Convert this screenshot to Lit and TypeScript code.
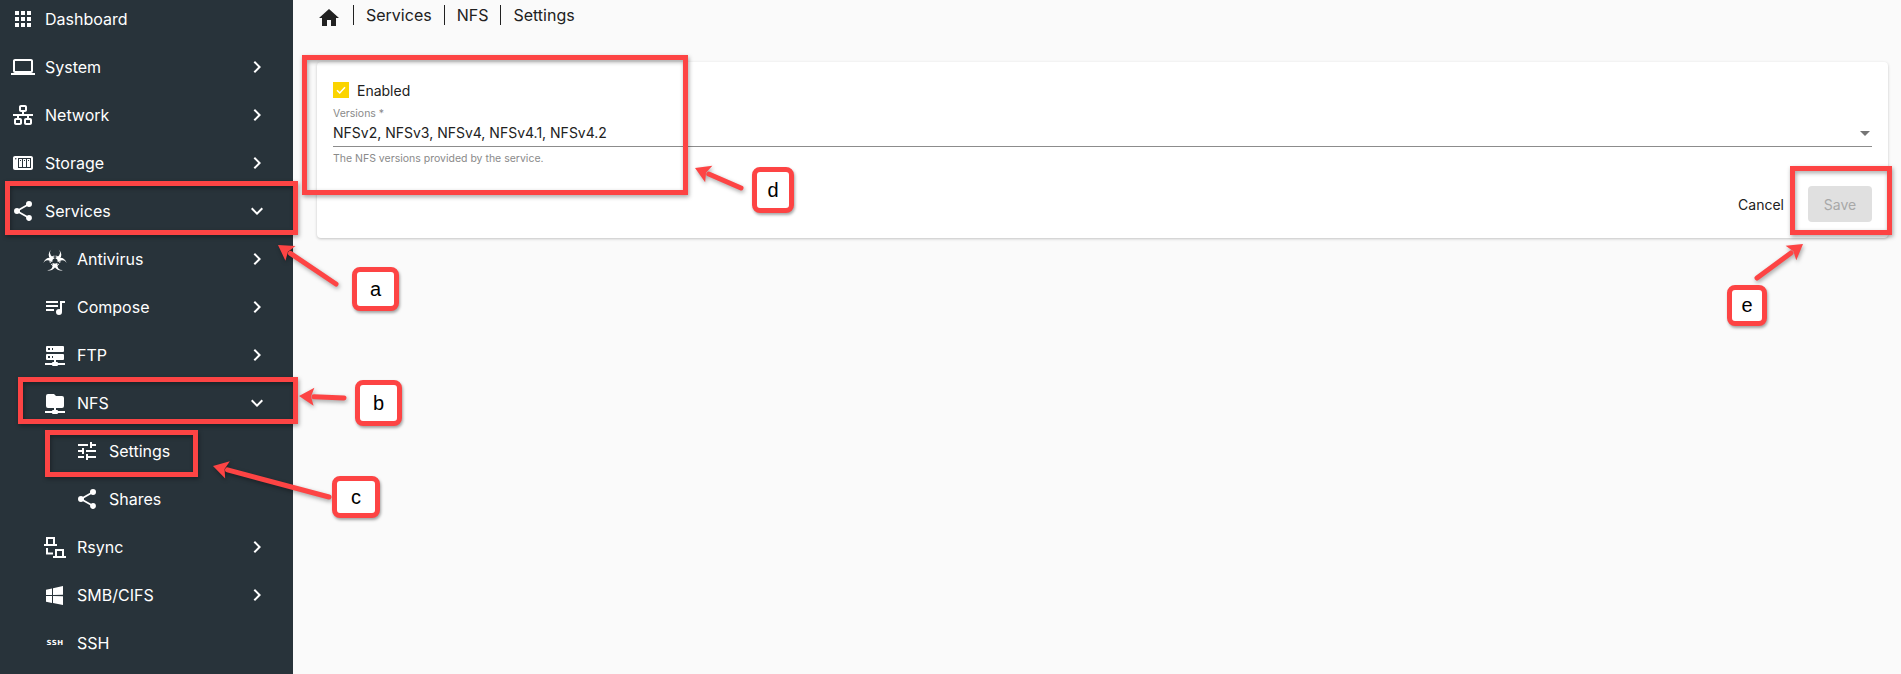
import { LitElement, html, css, svg } from "lit";
import { customElement } from "lit/decorators.js";

const P: Record<string, string> = {
  apps: "M16,20H20V16H16M16,14H20V10H16M10,8H14V4H10M16,8H20V4H16M10,14H14V10H10M4,14H8V10H4M4,20H8V16H4M10,20H14V16H10M4,8H8V4H4V8Z",
  laptop: "M4,6H20V16H4M20,18A2,2 0 0,0 22,16V6C22,4.89 21.1,4 20,4H4C2.89,4 2,4.89 2,6V16A2,2 0 0,0 4,18H0V20H24V18H20Z",
  lan: "M10,2C8.89,2 8,2.89 8,4V7C8,8.11 8.89,9 10,9H11V11H2V13H6V15H5C3.89,15 3,15.89 3,17V20C3,21.11 3.89,22 5,22H9C10.11,22 11,21.11 11,20V17C11,15.89 10.11,15 9,15H8V13H16V15H15C13.89,15 13,15.89 13,17V20C13,21.11 13.89,22 15,22H19C20.11,22 21,21.11 21,20V17C21,15.89 20.11,15 19,15H18V13H22V11H13V9H14C15.11,9 16,8.11 16,7V4C16,2.89 15.11,2 14,2H10M10,4H14V7H10V4M5,17H9V20H5V17M15,17H19V20H15V17Z",
  nas: "M4,5C2.89,5 2,5.89 2,7V17C2,18.11 2.89,19 4,19H20C21.11,19 22,18.11 22,17V7C22,5.89 21.11,5 20,5H4M4.75,7A0.75,0.75 0 0,1 5.5,7.75A0.75,0.75 0 0,1 4.75,8.5A0.75,0.75 0 0,1 4,7.75A0.75,0.75 0 0,1 4.75,7M7,7H20V17H7V7M8,8V16H11V8H8M12,8V16H15V8H12M16,8V16H19V8H16M9,9H10V10H9V9M13,9H14V10H13V9M17,9H18V10H17V9Z",
  share: "M18,16.08C17.24,16.08 16.56,16.38 16.04,16.85L8.91,12.7C8.96,12.47 9,12.24 9,12C9,11.76 8.96,11.53 8.91,11.3L15.96,7.19C16.5,7.69 17.21,8 18,8A3,3 0 0,0 21,5A3,3 0 0,0 18,2A3,3 0 0,0 15,5C15,5.24 15.04,5.47 15.09,5.7L8.04,9.81C7.5,9.31 6.79,9 6,9A3,3 0 0,0 3,12A3,3 0 0,0 6,15C6.79,15 7.5,14.69 8.04,14.19L15.16,18.34C15.11,18.55 15.08,18.77 15.08,19C15.08,20.61 16.39,21.91 18,21.91C19.61,21.91 20.92,20.61 20.92,19A2.92,2.92 0 0,0 18,16.08Z",
  music: "M15,6H3V8H15V6M15,10H3V12H15V10M3,16H11V14H3V16M17,6V14.18C16.69,14.07 16.35,14 16,14A3,3 0 0,0 13,17A3,3 0 0,0 16,20A3,3 0 0,0 19,17V8H22V6H17Z",
  server: "M13,19H14A1,1 0 0,1 15,20H22V22H15A1,1 0 0,1 14,23H10A1,1 0 0,1 9,22H2V20H9A1,1 0 0,1 10,19H11V17H4A1,1 0 0,1 3,16V12A1,1 0 0,1 4,11H20A1,1 0 0,1 21,12V16A1,1 0 0,1 20,17H13V19M4,3H20A1,1 0 0,1 21,4V8A1,1 0 0,1 20,9H4A1,1 0 0,1 3,8V4A1,1 0 0,1 4,3M9,7H10V5H9V7M9,15H10V13H9V15M5,5V7H7V5H5M5,13V15H7V13H5Z",
  folder: "M3,15V5A2,2 0 0,1 5,3H11L13,5H19A2,2 0 0,1 21,7V15A2,2 0 0,1 19,17H13V19H14A1,1 0 0,1 15,20H22V22H15A1,1 0 0,1 14,23H10A1,1 0 0,1 9,22H2V20H9A1,1 0 0,1 10,19H11V17H5A2,2 0 0,1 3,15Z",
  tune: "M3,17V19H9V17H3M3,5V7H13V5H3M13,21V19H21V17H13V15H11V21H13M7,9V11H3V13H7V15H9V9H7M21,13V11H11V13H21M15,9H17V7H21V5H17V3H15V9Z",
  windows: "M3,12V6.75L9,5.43V11.91L3,12M20,3V11.75L10,11.9V5.21L20,3M3,13L9,13.09V19.9L3,18.75V13M20,13.25V22L10,20.09V13.1L20,13.25Z",
  home: "M10,20V14H14V20H19V12H22L12,3L2,12H5V20H10Z",
  right: "M8.59,16.58L13.17,12L8.59,7.41L10,6L16,12L10,18L8.59,16.58Z",
  down: "M7.41,8.58L12,13.17L16.59,8.58L18,10L12,16L6,10L7.41,8.58Z",
  rsync: "M3,2H12V9H14V11H1V9H3V2M5,4V9H10V4H5M3,13H5V17.5H10V19.5H3V13M12,14H21V21H23V23H10V21H12V14M14,16V21H19V16H14Z",
};

const icon = (name: string) =>
  html`<svg class="ic" viewBox="0 0 24 24"><path fill-rule="evenodd" d=${P[name]}></path></svg>`;

const lobe = "M8.2,1.3A6.3,6.3 0 1 0 15.8,1.3A4.8,4.8 0 1 1 8.2,1.3Z";
const biohazard = html`<svg class="ic" viewBox="0 0 24 24">
  <g transform="translate(0 1.5)">
    ${[0, 120, 240].map(
      (a) => svg`<path transform="rotate(${a} 12 12.5)" fill="currentColor" d=${lobe}></path>`
    )}
    <circle cx="12" cy="12.5" r="5" fill="none" stroke="currentColor" stroke-width="1"></circle>
    <circle cx="12" cy="12.5" r="2.6" fill="#28333a"></circle>
    <g stroke="#28333a" stroke-width="1.1">
      ${[0, 120, 240].map(
        (a) => svg`<line transform="rotate(${a} 12 12.5)" x1="12" y1="12.5" x2="12" y2="4"></line>`
      )}
    </g>
  </g>
</svg>`;

type Row = { label: string; ic?: string; lvl: number; arrow?: "right" | "down"; custom?: unknown };

const rows: Row[] = [
  { label: "Dashboard", ic: "apps", lvl: 0 },
  { label: "System", ic: "laptop", lvl: 0, arrow: "right" },
  { label: "Network", ic: "lan", lvl: 0, arrow: "right" },
  { label: "Storage", ic: "nas", lvl: 0, arrow: "right" },
  { label: "Services", ic: "share", lvl: 0, arrow: "down" },
  { label: "Antivirus", lvl: 1, arrow: "right", custom: biohazard },
  { label: "Compose", ic: "music", lvl: 1, arrow: "right" },
  { label: "FTP", ic: "server", lvl: 1, arrow: "right" },
  { label: "NFS", ic: "folder", lvl: 1, arrow: "down" },
  { label: "Settings", ic: "tune", lvl: 2 },
  { label: "Shares", ic: "share", lvl: 2 },
  { label: "Rsync", ic: "rsync", lvl: 1, arrow: "right" },
  { label: "SMB/CIFS", ic: "windows", lvl: 1, arrow: "right" },
  { label: "SSH", lvl: 1, custom: html`<span class="ssh ic">SSH</span>` },
];

const boxes = [
  { x: 5, y: 181, w: 293, h: 54 },
  { x: 18, y: 377, w: 280, h: 47 },
  { x: 45, y: 430, w: 153, h: 47 },
  { x: 302, y: 55, w: 386, h: 140 },
  { x: 1790, y: 166, w: 102, h: 69 },
];
const labels = [
  { t: "a", x: 352, y: 267, w: 47, h: 44 },
  { t: "b", x: 355, y: 380, w: 47, h: 46 },
  { t: "c", x: 332, y: 476, w: 48, h: 42 },
  { t: "d", x: 752, y: 167, w: 42, h: 46 },
  { t: "e", x: 1727, y: 285, w: 40, h: 41 },
];
const arrows = [
  [336, 284, 278, 245],
  [344, 398, 299, 396],
  [329, 497, 213, 466],
  [741, 188, 695, 168],
  [1757, 278, 1803, 244],
];
const arrowShape = (a: number[]) => {
  const [x1, y1, x2, y2] = a;
  const dx = x2 - x1, dy = y2 - y1, len = Math.hypot(dx, dy);
  const ux = dx / len, uy = dy / len, nx = -uy, ny = ux;
  const bx = x2 - ux * 15, by = y2 - uy * 15;
  return svg`<line x1=${x1} y1=${y1} x2=${bx} y2=${by}></line>
    <polygon points="${x2},${y2} ${bx + nx * 9},${by + ny * 9} ${bx + ux * 3},${by + uy * 3} ${bx - nx * 9},${by - ny * 9}"></polygon>`;
};

@customElement("app-root")
export class AppRoot extends LitElement {
  static styles = css`
    :host {
      display: block;
      position: relative;
      height: 674px;
      overflow: hidden;
      font-family: Inter, "Liberation Sans", sans-serif;
      background: #fafafa;
      color: #212121;
    }
    .layout { display: grid; grid-template-columns: 293px 1fr; height: 674px; }
    .side { background: #28333a; color: #fff; overflow: hidden; }
    .nav { margin-top: -5px; display: flex; flex-direction: column; }
    .row { height: 48px; display: flex; align-items: center; gap: 10px; font-size: 16px; font-weight: 400; flex: none; }
    .l0 { padding-left: 11px; }
    .l1 { padding-left: 43px; }
    .l2 { padding-left: 75px; }
    .ic { width: 24px; height: 24px; flex: none; fill: currentColor; }
    .ssh { display: flex; align-items: center; justify-content: center; font-size: 7px; font-weight: 800; letter-spacing: 0.5px; font-family: "DejaVu Sans", sans-serif; }
    .label { flex: 1; }
    .chev { display: flex; margin-right: 24px; }
    .main { padding: 0 13px 0 24px; display: flex; flex-direction: column; min-width: 0; }
    .crumbs { height: 30px; display: flex; align-items: center; font-size: 16px; }
    .crumbs .ic { margin-top: 6px; margin-right: 12px; color: #212121; }
    .crumbs span { padding: 0 12px; height: 20px; line-height: 21px; border-left: 1px solid #212121; }
    .card { margin-top: 32px; background: #fff; border-radius: 4px; height: 176px; box-shadow: 0 1px 3px rgba(0,0,0,.22); padding: 20px 16px 16px; box-sizing: border-box; display: flex; flex-direction: column; }
    .check { display: flex; align-items: center; gap: 8px; font-size: 14px; height: 16px; }
    .box { width: 16px; height: 16px; background: #fbd400; display: flex; align-items: center; justify-content: center; }
    .box svg { width: 12px; height: 12px; fill: none; stroke: #fff; stroke-width: 3; }
    .field { margin-top: 9px; display: flex; flex-direction: column; }
    .flabel { font-size: 10.5px; color: #8a8a8a; line-height: 14px; }
    .fval { display: flex; align-items: center; justify-content: space-between; font-size: 14px; height: 20px; margin-top: 2px; padding-bottom: 3px; border-bottom: 1px solid #8c8c8c; line-height: 20px; }
    .tri { width: 0; height: 0; border-left: 5px solid transparent; border-right: 5px solid transparent; border-top: 5px solid #757575; margin-right: 2px; }
    .hint { font-size: 10.5px; color: #8a8a8a; margin-top: 5px; line-height: 14px; }
    .actions { margin-top: auto; display: flex; justify-content: flex-end; align-items: center; gap: 24px; font-size: 14px; }
    .save { width: 64px; height: 36px; border-radius: 4px; background: #e0e0e0; color: #a8a8a8; display: flex; align-items: center; justify-content: center; }
    .overlay { position: absolute; inset: 0; pointer-events: none; }
    .overlay svg { position: absolute; inset: 0; width: 100%; height: 100%; filter: drop-shadow(1px 2px 2px rgba(0,0,0,.35)); }
    .overlay line { stroke: #fd4444; stroke-width: 5; stroke-linecap: round; }
    .overlay polygon { fill: #fd4444; }
    .mark { position: absolute; box-sizing: border-box; border: 5px solid #fd4444; filter: drop-shadow(1px 2px 2px rgba(0,0,0,.35)); }
    .tag { position: absolute; box-sizing: border-box; border: 5px solid #fd4444; border-radius: 8px; background: #fff; color: #000; display: flex; align-items: center; justify-content: center; font: 20px "Liberation Sans", Arial, sans-serif; box-shadow: 1px 2px 3px rgba(0,0,0,.35); }
  `;

  render() {
    return html`
      <div class="layout">
        <aside class="side">
          <nav class="nav">
            ${rows.map(
              (r) => html`<div class="row l${r.lvl}">
                ${r.custom ?? icon(r.ic!)}
                <span class="label">${r.label}</span>
                ${r.arrow ? html`<span class="chev">${icon(r.arrow)}</span>` : ""}
              </div>`
            )}
          </nav>
        </aside>
        <main class="main">
          <div class="crumbs">
            ${icon("home")}
            <span>Services</span><span>NFS</span><span>Settings</span>
          </div>
          <section class="card">
            <label class="check">
              <span class="box"><svg viewBox="0 0 24 24"><path d="M4 12.5l5.5 5.5L20 6.5"></path></svg></span>
              Enabled
            </label>
            <div class="field">
              <span class="flabel">Versions *</span>
              <div class="fval"><span>NFSv2, NFSv3, NFSv4, NFSv4.1, NFSv4.2</span><span class="tri"></span></div>
              <span class="hint">The NFS versions provided by the service.</span>
            </div>
            <div class="actions">
              <span>Cancel</span>
              <span class="save">Save</span>
            </div>
          </section>
        </main>
      </div>
      <div class="overlay">
        ${boxes.map((b) => html`<div class="mark" style="left:${b.x}px;top:${b.y}px;width:${b.w}px;height:${b.h}px"></div>`)}
        <svg viewBox="0 0 1901 674">${arrows.map(arrowShape)}</svg>
        ${labels.map((l) => html`<div class="tag" style="left:${l.x}px;top:${l.y}px;width:${l.w}px;height:${l.h}px">${l.t}</div>`)}
      </div>
    `;
  }
}
